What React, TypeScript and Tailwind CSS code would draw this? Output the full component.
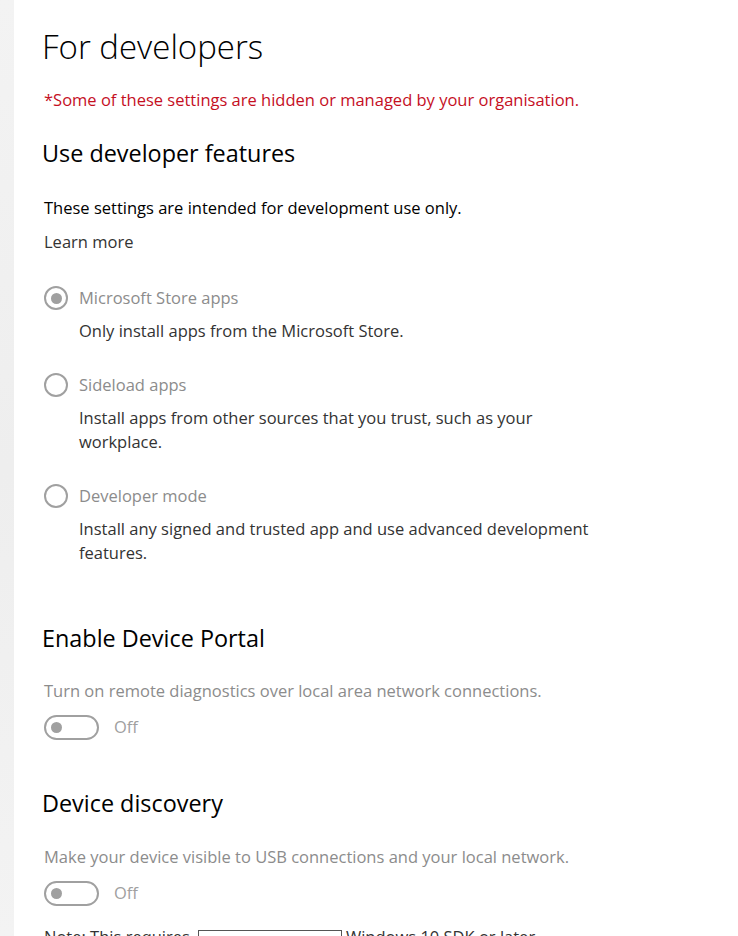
import React from "react";

const font = { fontFamily: '"Open Sans", "Noto Sans", sans-serif' };

function Radio({ checked, label, children }: { checked?: boolean; label: string; children: React.ReactNode }) {
  return (
    <div className="flex flex-col">
      <div className="flex items-center gap-[11px] h-[24px]">
        <span className="flex h-[24px] w-[24px] items-center justify-center rounded-full border-2 border-[#a0a0a0]">
          {checked && <span className="h-[11px] w-[11px] rounded-full bg-[#a0a0a0]" />}
        </span>
        <span className="text-[#8c8c8c]">{label}</span>
      </div>
      <p className="mt-[9px] pl-[35px] leading-[24px] text-[#333]">{children}</p>
    </div>
  );
}

function Toggle() {
  return (
    <div className="flex items-center gap-[15px]">
      <span className="flex h-[25px] w-[55px] items-center rounded-full border-2 border-[#a0a0a0] pl-[5px]">
        <span className="h-[11px] w-[11px] rounded-full bg-[#a0a0a0]" />
      </span>
      <span className="text-[#a0a0a0]">Off</span>
    </div>
  );
}

export default function App() {
  return (
    <div className="flex h-[936px] overflow-hidden bg-white text-[16.5px]" style={font}>
      <div className="w-[14px] shrink-0 bg-gradient-to-b from-[#f3f3f3] via-[#eeeeee] to-[#f3f3f3]" />
      <main className="flex flex-col pl-[28px] pr-6">
        <h1 className="mt-[27px] text-[33px] font-light leading-[40px] text-black">For developers</h1>
        <p className="mt-[21px] ml-[2px] leading-[24px] text-[#c50f1f]">
          *Some of these settings are hidden or managed by your organisation.
        </p>

        <h2 className="mt-[26px] text-[23.4px] leading-[30px] text-black">Use developer features</h2>
        <p className="mt-[28px] ml-[2px] leading-[24px] text-black">
          These settings are intended for development use only.
        </p>
        <a className="mt-[10px] ml-[2px] leading-[24px] text-[#333]">Learn more</a>

        <div className="mt-[32px] ml-[2px] flex w-[555px] flex-col gap-[30px]">
          <Radio checked label="Microsoft Store apps">
            Only install apps from the Microsoft Store.
          </Radio>
          <Radio label="Sideload apps">
            Install apps from other sources that you trust, such as your workplace.
          </Radio>
          <Radio label="Developer mode">
            Install any signed and trusted app and use advanced development features.
          </Radio>
        </div>

        <h2 className="mt-[58px] text-[23.4px] leading-[30px] text-black">Enable Device Portal</h2>
        <p className="mt-[26px] ml-[2px] leading-[24px] text-[#8c8c8c]">
          Turn on remote diagnostics over local area network connections.
        </p>
        <div className="mt-[12px] ml-[2px]">
          <Toggle />
        </div>

        <h2 className="mt-[48px] text-[23.4px] leading-[30px] text-black">Device discovery</h2>
        <p className="mt-[27px] ml-[2px] leading-[24px] text-[#8c8c8c]">
          Make your device visible to USB connections and your local network.
        </p>
        <div className="mt-[12px] ml-[2px]">
          <Toggle />
        </div>

        <p className="mt-[19px] ml-[2px] flex items-start leading-[24px] text-[#333]">
          <span>Note: This requires</span>
          <span className="ml-[8px] mr-[4px] mt-[5px] h-[20px] w-[144px] border border-[#555]" />
          <span>Windows 10 SDK or later</span>
        </p>
      </main>
    </div>
  );
}
